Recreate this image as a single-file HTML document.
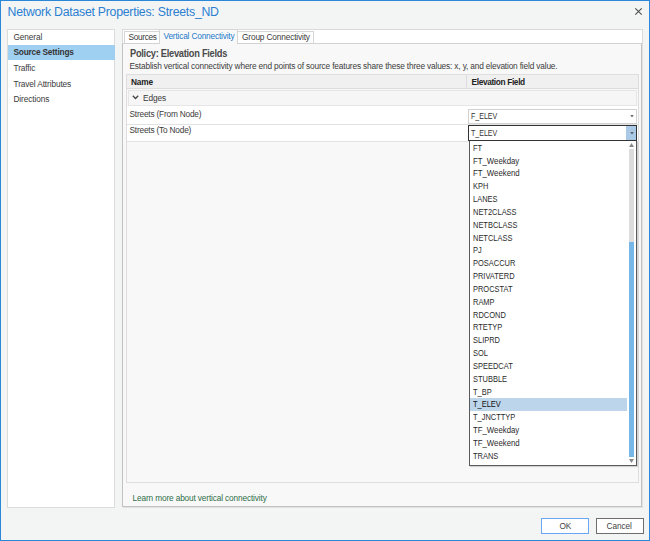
<!DOCTYPE html>
<html><head><meta charset="utf-8">
<style>
*{box-sizing:border-box;margin:0;padding:0}
html,body{width:650px;height:541px;overflow:hidden;background:#f3f5f5}
body{position:relative;font-family:"Liberation Sans",sans-serif;font-size:8px;color:#444}
.a{position:absolute;white-space:nowrap}
.t{letter-spacing:-0.12px}
</style></head><body>
<div class="a" style="left:0;top:0;width:650px;height:541px;border:1px solid #2b88d8;background:#f3f5f5"></div>
<div class="a t" style="left:7.5px;top:6.29px;font-size:12.3px;line-height:12.3px;color:#2b7fd1;letter-spacing:-0.25px">Network Dataset Properties: Streets_ND</div>
<svg class="a" style="left:634px;top:7px" width="9" height="9" viewBox="0 0 9 9"><path d="M1.3 1.3L7.7 7.7M7.7 1.3L1.3 7.7" stroke="#4a4a4a" stroke-width="1.05"/></svg>
<div class="a" style="left:7px;top:29px;width:108px;height:479px;background:#fff;border:1px solid #dcdcdc"></div>
<div class="a" style="left:8px;top:45px;width:107px;height:15px;background:#9fd0f2"></div>
<div class="a t" style="left:13.5px;top:32.57px;font-size:8.3px;line-height:8.3px;color:#3a3a3a;">General</div>
<div class="a t" style="left:13.5px;top:48.27px;font-size:8.3px;line-height:8.3px;color:#3a3a3a;font-weight:bold;color:#333;letter-spacing:-0.2px">Source Settings</div>
<div class="a t" style="left:13.5px;top:63.77px;font-size:8.3px;line-height:8.3px;color:#3a3a3a;">Traffic</div>
<div class="a t" style="left:13.5px;top:79.67px;font-size:8.3px;line-height:8.3px;color:#3a3a3a;">Travel Attributes</div>
<div class="a t" style="left:13.5px;top:94.77px;font-size:8.3px;line-height:8.3px;color:#3a3a3a;">Directions</div>
<div class="a" style="left:122px;top:29px;width:521px;height:16px;background:#fff;border:1px solid #dadada;border-bottom:none"></div>
<div class="a" style="left:122px;top:43px;width:520px;height:464px;background:#f8f8f8;border:1px solid #c2c2c2;border-top-color:#d2d2d2;box-shadow:1px 1px 0 #e2e2e2"></div>
<div class="a" style="left:124px;top:31px;width:36px;height:12px;border:1px solid #d6d6d6;border-bottom:none;background:#fff"></div>
<div class="a t" style="left:128.5px;top:33.37px;font-size:8.3px;line-height:8.3px;color:#3a3a3a;letter-spacing:-0.35px">Sources</div>
<div class="a" style="left:159px;top:29px;width:79px;height:15px;background:#f8f8f8;border:1px solid #d6d6d6;border-bottom:none"></div>
<div class="a t" style="left:163.5px;top:31.87px;font-size:8.3px;line-height:8.3px;color:#1b78c9;letter-spacing:-0.18px">Vertical Connectivity</div>
<div class="a" style="left:237px;top:31px;width:77px;height:12px;border:1px solid #d6d6d6;border-bottom:none;background:#fff"></div>
<div class="a t" style="left:242px;top:33.17px;font-size:8.3px;line-height:8.3px;color:#3a3a3a;letter-spacing:-0.15px">Group Connectivity</div>
<div class="a t" style="left:129.5px;top:49.28px;font-size:10.3px;line-height:10.3px;font-weight:bold;color:#4a4a4a;letter-spacing:-0.3px;transform:scaleX(0.9);transform-origin:0 0">Policy: Elevation Fields</div>
<div class="a t" style="left:129.5px;top:61.77px;font-size:8.3px;line-height:8.3px;color:#3c3c3c;letter-spacing:-0.16px">Establish vertical connectivity where end points of source features share these three values: x, y, and elevation field value.</div>
<div class="a" style="left:126px;top:74px;width:513px;height:409px;border:1px solid #dedede;background:#f8f8f8"></div>
<div class="a" style="left:127px;top:75px;width:511px;height:14px;background:#f0f0f0;border-bottom:1px solid #dcdcdc"></div>
<div class="a" style="left:466px;top:75px;width:1px;height:14px;background:#dcdcdc"></div>
<div class="a t" style="left:131px;top:78.37px;font-size:8.3px;line-height:8.3px;font-weight:bold;color:#222;letter-spacing:-0.2px">Name</div>
<div class="a t" style="left:471.5px;top:78.37px;font-size:8.3px;line-height:8.3px;font-weight:bold;color:#222;letter-spacing:-0.35px">Elevation Field</div>
<div class="a" style="left:128px;top:90px;width:509px;height:16px;background:#f6f6f6;border:1px solid #e6e6e6"></div>
<svg class="a" style="left:132px;top:95px" width="7" height="5" viewBox="0 0 7 5"><path d="M0.8 0.8L3.5 3.5L6.2 0.8" fill="none" stroke="#444" stroke-width="1.3"/></svg>
<div class="a t" style="left:143px;top:94.17px;font-size:8.3px;line-height:8.3px;color:#3a3a3a">Edges</div>
<div class="a" style="left:127px;top:106px;width:511px;height:35px;background:#fff"></div>
<div class="a t" style="left:129.5px;top:109.67px;font-size:8.3px;line-height:8.3px;color:#3a3a3a;letter-spacing:-0.2px">Streets (From Node)</div>
<div class="a" style="left:127px;top:124px;width:511px;height:1px;background:#e2e2e2"></div>
<div class="a t" style="left:129.5px;top:126.47px;font-size:8.3px;line-height:8.3px;color:#3a3a3a;letter-spacing:-0.2px">Streets (To Node)</div>
<div class="a" style="left:127px;top:141px;width:511px;height:1px;background:#e2e2e2"></div>
<div class="a" style="left:468px;top:109px;width:169px;height:15px;background:#fff;border:1px solid #d2d2d2"></div>
<div class="a t" style="left:470.8px;top:112.20px;font-size:8.5px;line-height:8.5px;color:#333;letter-spacing:0;transform:scaleX(0.83);transform-origin:0 0">F_ELEV</div>
<svg class="a" style="left:630px;top:115px" width="4" height="3" viewBox="0 0 4 3"><path d="M0.3 0.2H3.7L2 2.2Z" fill="#444"/></svg>
<div class="a" style="left:468px;top:125px;width:169px;height:16px;background:#fff;border:1px solid #333"></div>
<div class="a" style="left:626px;top:126px;width:10px;height:14px;background:#a9c9e6"></div>
<div class="a t" style="left:471px;top:129.20px;font-size:8.5px;line-height:8.5px;color:#333;letter-spacing:0;transform:scaleX(0.83);transform-origin:0 0">T_ELEV</div>
<svg class="a" style="left:630px;top:132px" width="4" height="3" viewBox="0 0 4 3"><path d="M0.3 0.2H3.7L2 2.2Z" fill="#444"/></svg>
<div class="a" style="left:469px;top:141px;width:168px;height:325px;background:#fff;border:1px solid #5a5a5a;border-top:none;box-shadow:1px 1px 1px rgba(0,0,0,0.15)"></div>
<svg class="a" style="left:629px;top:143px" width="5" height="4" viewBox="0 0 5 4"><path d="M0 4H5L2.5 0Z" fill="#888"/></svg>
<div class="a" style="left:629px;top:149px;width:5px;height:93px;background:#dcdcdc"></div>
<div class="a" style="left:629px;top:242px;width:5px;height:215px;background:#77b7e7"></div>
<svg class="a" style="left:629px;top:459px" width="5" height="4" viewBox="0 0 5 4"><path d="M0 0H5L2.5 4Z" fill="#888"/></svg>
<div class="a" style="left:470px;top:398px;width:157px;height:13px;background:#bcd5ea"></div>
<div class="a t" style="left:473px;top:143.77px;font-size:8.3px;line-height:8.3px;color:#2a2a2a;letter-spacing:0;transform:scaleX(0.9);transform-origin:0 0">FT</div>
<div class="a t" style="left:473px;top:156.60px;font-size:8.3px;line-height:8.3px;color:#2a2a2a;letter-spacing:0;transform:scaleX(0.94);transform-origin:0 0">FT_Weekday</div>
<div class="a t" style="left:473px;top:169.43px;font-size:8.3px;line-height:8.3px;color:#2a2a2a;letter-spacing:0;transform:scaleX(0.94);transform-origin:0 0">FT_Weekend</div>
<div class="a t" style="left:473px;top:182.26px;font-size:8.3px;line-height:8.3px;color:#2a2a2a;letter-spacing:0;transform:scaleX(0.9);transform-origin:0 0">KPH</div>
<div class="a t" style="left:473px;top:195.09px;font-size:8.3px;line-height:8.3px;color:#2a2a2a;letter-spacing:0;transform:scaleX(0.9);transform-origin:0 0">LANES</div>
<div class="a t" style="left:473px;top:207.92px;font-size:8.3px;line-height:8.3px;color:#2a2a2a;letter-spacing:0;transform:scaleX(0.9);transform-origin:0 0">NET2CLASS</div>
<div class="a t" style="left:473px;top:220.75px;font-size:8.3px;line-height:8.3px;color:#2a2a2a;letter-spacing:0;transform:scaleX(0.9);transform-origin:0 0">NETBCLASS</div>
<div class="a t" style="left:473px;top:233.58px;font-size:8.3px;line-height:8.3px;color:#2a2a2a;letter-spacing:0;transform:scaleX(0.9);transform-origin:0 0">NETCLASS</div>
<div class="a t" style="left:473px;top:246.41px;font-size:8.3px;line-height:8.3px;color:#2a2a2a;letter-spacing:0;transform:scaleX(0.9);transform-origin:0 0">PJ</div>
<div class="a t" style="left:473px;top:259.24px;font-size:8.3px;line-height:8.3px;color:#2a2a2a;letter-spacing:0;transform:scaleX(0.9);transform-origin:0 0">POSACCUR</div>
<div class="a t" style="left:473px;top:272.07px;font-size:8.3px;line-height:8.3px;color:#2a2a2a;letter-spacing:0;transform:scaleX(0.9);transform-origin:0 0">PRIVATERD</div>
<div class="a t" style="left:473px;top:284.90px;font-size:8.3px;line-height:8.3px;color:#2a2a2a;letter-spacing:0;transform:scaleX(0.9);transform-origin:0 0">PROCSTAT</div>
<div class="a t" style="left:473px;top:297.73px;font-size:8.3px;line-height:8.3px;color:#2a2a2a;letter-spacing:0;transform:scaleX(0.9);transform-origin:0 0">RAMP</div>
<div class="a t" style="left:473px;top:310.56px;font-size:8.3px;line-height:8.3px;color:#2a2a2a;letter-spacing:0;transform:scaleX(0.9);transform-origin:0 0">RDCOND</div>
<div class="a t" style="left:473px;top:323.39px;font-size:8.3px;line-height:8.3px;color:#2a2a2a;letter-spacing:0;transform:scaleX(0.9);transform-origin:0 0">RTETYP</div>
<div class="a t" style="left:473px;top:336.22px;font-size:8.3px;line-height:8.3px;color:#2a2a2a;letter-spacing:0;transform:scaleX(0.9);transform-origin:0 0">SLIPRD</div>
<div class="a t" style="left:473px;top:349.05px;font-size:8.3px;line-height:8.3px;color:#2a2a2a;letter-spacing:0;transform:scaleX(0.9);transform-origin:0 0">SOL</div>
<div class="a t" style="left:473px;top:361.88px;font-size:8.3px;line-height:8.3px;color:#2a2a2a;letter-spacing:0;transform:scaleX(0.9);transform-origin:0 0">SPEEDCAT</div>
<div class="a t" style="left:473px;top:374.71px;font-size:8.3px;line-height:8.3px;color:#2a2a2a;letter-spacing:0;transform:scaleX(0.9);transform-origin:0 0">STUBBLE</div>
<div class="a t" style="left:473px;top:387.54px;font-size:8.3px;line-height:8.3px;color:#2a2a2a;letter-spacing:0;transform:scaleX(0.9);transform-origin:0 0">T_BP</div>
<div class="a t" style="left:473px;top:400.37px;font-size:8.3px;line-height:8.3px;color:#2a2a2a;letter-spacing:0;transform:scaleX(0.9);transform-origin:0 0;color:#111">T_ELEV</div>
<div class="a t" style="left:473px;top:413.20px;font-size:8.3px;line-height:8.3px;color:#2a2a2a;letter-spacing:0;transform:scaleX(0.9);transform-origin:0 0">T_JNCTTYP</div>
<div class="a t" style="left:473px;top:426.03px;font-size:8.3px;line-height:8.3px;color:#2a2a2a;letter-spacing:0;transform:scaleX(0.94);transform-origin:0 0">TF_Weekday</div>
<div class="a t" style="left:473px;top:438.86px;font-size:8.3px;line-height:8.3px;color:#2a2a2a;letter-spacing:0;transform:scaleX(0.94);transform-origin:0 0">TF_Weekend</div>
<div class="a t" style="left:473px;top:451.69px;font-size:8.3px;line-height:8.3px;color:#2a2a2a;letter-spacing:0;transform:scaleX(0.9);transform-origin:0 0">TRANS</div>
<div class="a t" style="left:132.6px;top:493.67px;font-size:8.3px;line-height:8.3px;color:#2f6e48;letter-spacing:-0.15px">Learn more about vertical connectivity</div>
<div class="a" style="left:541px;top:518px;width:48px;height:16px;background:#fff;border:1px solid #6aa6f2"></div>
<div class="a t" style="left:559.5px;top:521.77px;font-size:8.3px;line-height:8.3px;color:#444">OK</div>
<div class="a" style="left:596px;top:518px;width:48px;height:16px;background:#fff;border:1px solid #6e6e6e"></div>
<div class="a t" style="left:606.5px;top:521.97px;font-size:8.3px;line-height:8.3px;color:#444;letter-spacing:-0.1px">Cancel</div>
</body></html>
